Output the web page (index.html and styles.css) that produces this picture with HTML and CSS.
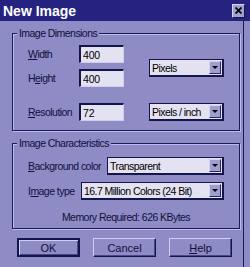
FILE: index.html
```html
<!DOCTYPE html>
<html lang="en">
<head>
    <meta charset="UTF-8">
    <meta name="viewport" content="width=device-width, initial-scale=1.0">
    <title>New Image</title>
    <link rel="stylesheet" href="styles.css">
</head>
<body>
    <div class="titlebar">
        <span class="title">New Image</span>
        <div class="close">
            <svg width="7" height="7" viewBox="0 0 7 7"><path d="M0.5 0.5 L6.5 6.5 M6.5 0.5 L0.5 6.5" stroke="#000" stroke-width="1.8"/></svg>
        </div>
    </div>

    <div class="dialog">
        <fieldset class="group dims">
            <legend>Image Dimensions</legend>
            <div class="dim-top">
                <div class="pair">
                    <div class="row"><label class="lbl-dim"><u>W</u>idth</label><input type="text" value="400"></div>
                    <div class="row"><label class="lbl-dim">H<u>e</u>ight</label><input type="text" value="400"></div>
                </div>
                <div class="combo units"><span>Pixels</span><i class="drop"></i></div>
            </div>
            <div class="row res">
                <label class="lbl-dim"><u>R</u>esolution</label><input type="text" value="72">
                <div class="combo units"><span>Pixels / inch</span><i class="drop"></i></div>
            </div>
        </fieldset>

        <fieldset class="group chars">
            <legend>Image Characteristics</legend>
            <div class="row">
                <label class="lbl-bg"><u>B</u>ackground color</label>
                <div class="combo wide"><span>Transparent</span><i class="drop"></i></div>
            </div>
            <div class="row type">
                <label class="lbl-type">I<u>m</u>age type</label>
                <div class="combo wide"><span>16.7 Million Colors (24 Bit)</span><i class="drop"></i></div>
            </div>
            <div class="memory">Memory Required: 626 KBytes</div>
        </fieldset>

        <div class="buttons">
            <button class="btn default">OK</button>
            <button class="btn">Cancel</button>
            <button class="btn"><u>H</u>elp</button>
        </div>
    </div>
</body>
</html>
```

FILE: styles.css
```css
body {
    margin: 0;
    width: 250px;
    height: 267px;
    overflow: hidden;
    background: #8f8bc5;
    font-family: "Liberation Sans", Arial, sans-serif;
    font-size: 10.5px;
    letter-spacing: -0.55px;
    color: #10103c;
}

.titlebar {
    display: flex;
    align-items: center;
    justify-content: space-between;
    height: 21px;
    padding-left: 3px;
    background: #25237f;
}

.title {
    color: #fff;
    font-size: 14px;
    font-weight: bold;
    letter-spacing: 0;
}

.close {
    display: flex;
    align-items: center;
    justify-content: center;
    width: 11px;
    height: 12px;
    margin-right: 5px;
    background: #a3a1d2;
    border: 1px solid;
    border-color: #d6d4f4 #15154e #15154e #d6d4f4;
}

.dialog {
    box-sizing: border-box;
    width: 244px;
    height: 246px;
    padding: 6px 0 0 12px;
    border-right: 1px solid #1b1b5a;
}

.group {
    box-sizing: border-box;
    width: 228px;
    margin: 0;
    padding: 0 15px;
    border: 1px solid #1b1b5a;
    box-shadow: inset 1px 1px 0 #bdbbe8, 1px 1px 0 #bdbbe8;
    min-inline-size: 0;
}

.group legend {
    margin-left: -11px;
    padding: 0 2px;
    line-height: 12px;
    background: #8f8bc5;
}

.dims {
    padding-top: 6px;
    padding-bottom: 9px;
}

.chars {
    margin-top: 6px;
    padding-top: 8px;
    padding-bottom: 5px;
}

.row {
    display: flex;
    align-items: center;
    height: 18px;
}

.pair .row + .row {
    margin-top: 6px;
}

.dim-top {
    display: flex;
}

.dim-top .units {
    align-self: flex-end;
    margin-bottom: 10px;
}

.res {
    margin-top: 16px;
}

.lbl-dim { width: 51px; }
.lbl-bg { width: 79px; }
.lbl-type { width: 53px; }

input {
    box-sizing: border-box;
    width: 45px;
    height: 18px;
    margin: 0;
    padding: 0 0 0 2px;
    font: inherit;
    letter-spacing: -0.2px;
    color: #000;
    background: #e4e2f0;
    border: 1px solid;
    border-width: 2px 1px 1px 2px;
    border-color: #15154e #cfcdf0 #cfcdf0 #15154e;
    outline: none;
}

.combo {
    box-sizing: border-box;
    display: flex;
    align-items: center;
    justify-content: space-between;
    height: 18px;
    padding-left: 2px;
    background: #e4e2f0;
    color: #000;
    border: 1px solid #15154e;
    border-width: 1px 2px 2px 1px;
    white-space: nowrap;
}

.units {
    width: 75px;
    margin-left: auto;
}

.wide {
    flex: 1;
}

.drop {
    box-sizing: border-box;
    display: flex;
    flex-shrink: 0;
    align-items: center;
    justify-content: center;
    width: 12px;
    height: 13px;
    margin-right: 1px;
    background: #a09ed0;
    border: 1px solid;
    border-color: #d6d4f4 #2a2a66 #2a2a66 #d6d4f4;
}

.drop::after {
    content: "";
    border-left: 3px solid transparent;
    border-right: 3px solid transparent;
    border-top: 3px solid #000;
}

.type {
    margin-top: 7px;
}

.memory {
    margin-top: 11px;
    line-height: 12px;
    text-align: center;
}

.buttons {
    display: flex;
    gap: 13px;
    margin-top: 9px;
    padding-left: 5px;
}

.btn {
    box-sizing: border-box;
    width: 63px;
    height: 19px;
    padding: 0;
    font: inherit;
    font-size: 11px;
    color: #10103c;
    background: #8f8bc5;
    border: 1px solid;
    border-color: #d0cef2 #15154e #15154e #d0cef2;
    box-shadow: inset -1px -1px 0 #4a4888;
}

.btn.default {
    border: 2px solid #15154e;
    box-shadow: inset 1px 1px 0 #d0cef2, inset -1px -1px 0 #4a4888;
}
```
